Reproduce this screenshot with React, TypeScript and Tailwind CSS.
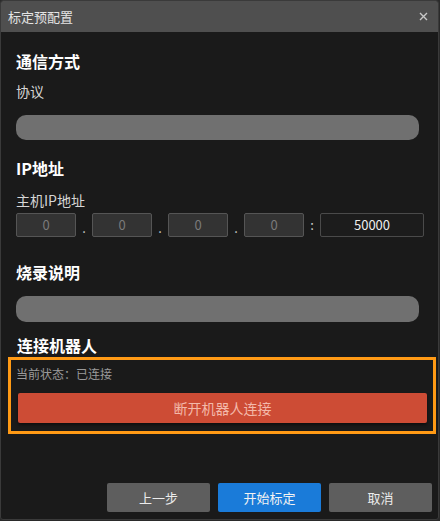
import React from "react";

const font = { fontFamily: '"Noto Sans CJK SC", "Noto Sans", sans-serif' };

function IpBox({ value }: { value: string }) {
  return (
    <div className="flex h-[24px] w-[60px] items-center justify-center rounded-[2px] border border-[#555555] bg-[#333333] text-[13px] text-[#7a7a7a]">
      {value}
    </div>
  );
}

function Dot() {
  return <div className="flex h-[24px] w-[16px] items-end justify-center pb-[1px] text-[13px] leading-[16px] text-[#cfcfcf]">.</div>;
}

export default function App() {
  return (
    <div style={font} className="h-[521px] w-[440px] bg-[#2a2a2a]">
      <div className="flex h-[520px] w-[439px] flex-col overflow-hidden rounded-[3px] border border-[#3a3a3a] bg-[#1a1a1a]">
        <div className="flex h-[31px] shrink-0 items-center justify-between bg-[#4f4f4f] pl-[7px] pr-[10px]">
          <span className="text-[13px] text-[#e4e4e4]">标定预配置</span>
          <svg width="9" height="9" viewBox="0 0 9 9" className="mb-[1px]">
            <path d="M1 1L8 8M8 1L1 8" stroke="#c8c8c8" strokeWidth="1.4" />
          </svg>
        </div>

        <div className="flex flex-1 flex-col pl-[15px]">
          <div className="mt-[17px] text-[16px] font-bold leading-[24px] text-white">通信方式</div>
          <div className="mt-[8px] text-[14px] leading-[20px] text-[#d6d6d6]">协议</div>
          <div className="mt-[14px] h-[25px] w-[403px] rounded-[10px] bg-[#707070]" />

          <div className="mt-[16px] text-[16px] font-bold leading-[24px] text-white">IP地址</div>
          <div className="mt-[10px] text-[14px] leading-[20px] text-[#d6d6d6]">主机IP地址</div>
          <div className="mt-[3px] flex items-center">
            <IpBox value="0" />
            <Dot />
            <IpBox value="0" />
            <Dot />
            <IpBox value="0" />
            <Dot />
            <IpBox value="0" />
            <div className="flex h-[24px] w-[16px] items-center justify-center text-[13px] text-[#cfcfcf]">:</div>
            <div className="flex h-[24px] w-[104px] items-center justify-center rounded-[2px] border border-[#4a4a4a] bg-[#1c1c1c] text-[13px] text-[#eeeeee]">
              50000
            </div>
          </div>

          <div className="mt-[23px] text-[16px] font-bold leading-[24px] text-white">烧录说明</div>
          <div className="mt-[12px] h-[26px] w-[403px] rounded-[10px] bg-[#707070]" />

          <div className="mt-[11px] pl-[1px] text-[16px] font-bold leading-[24px] text-white">连接机器人</div>
          <div className="-ml-[8px] flex w-[428px] flex-col border-[3px] border-[#ff9a15] pb-[8px] pl-[5px] pr-[6px] pt-[5px]">
            <div className="text-[12px] leading-[18px] text-[#9a9a9a]">当前状态：已连接</div>
            <button className="ml-[2px] mt-[10px] flex h-[30px] items-center justify-center rounded-[2px] bg-[#cd4c35] text-[14px] text-[#f3b9aa] shadow-[0_2px_3px_rgba(0,0,0,0.45)]">
              断开机器人连接
            </button>
          </div>

          <div className="flex-1" />
          <div className="mb-[7px] mr-[6px] flex justify-end gap-[8px]">
            <button className="h-[29px] w-[103px] rounded-[2px] bg-[#5e5e5e] text-[13px] text-[#ececec]">上一步</button>
            <button className="h-[29px] w-[103px] rounded-[2px] bg-[#1a7bd9] text-[13px] text-[#f2f2f2]">开始标定</button>
            <button className="h-[29px] w-[103px] rounded-[2px] bg-[#5e5e5e] text-[13px] text-[#ececec]">取消</button>
          </div>
        </div>
      </div>
    </div>
  );
}
